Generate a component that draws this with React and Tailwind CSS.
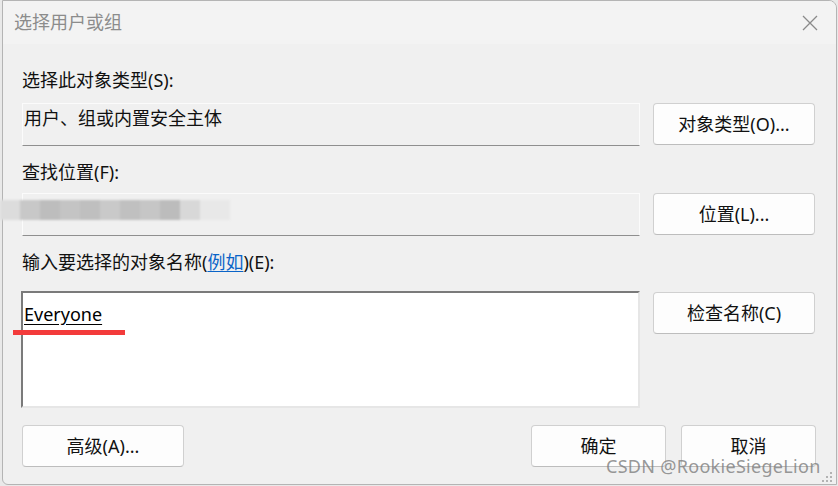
import React from "react";

const font = { fontFamily: '"Noto Sans", "Noto Sans CJK SC", sans-serif' };

const Btn = ({ children, className = "" }) => (
  <button
    className={`h-[42px] rounded-[4px] border border-[#d0d0d0] border-b-[#bdbdbd] bg-[#fdfdfd] text-[18px] text-[#111] flex items-center justify-center ${className}`}
  >
    {children}
  </button>
);

const ReadBox = ({ children }) => (
  <div className="w-[618px] h-[43px] border border-[#fbfbfb] border-b-[#8f8f8f] bg-[#f0f0f0] flex items-start pt-[1px] pl-[1px] text-[18px] text-[#111]">
    {children}
  </div>
);

export default function App() {
  return (
    <div className="w-[838px] h-[486px] bg-[#e9e9e9] overflow-hidden relative" style={font}>
      <div className="ml-[2px] w-[835px] h-[485px] border border-[#b4b4b4] rounded-tr-[8px] rounded-bl-[6px] overflow-hidden flex flex-col bg-[#f0f0f0]">
        {/* title bar */}
        <div className="h-[43px] bg-[#f3f3f3] flex items-center justify-between pl-[11px] pr-[16px] shrink-0">
          <span className="text-[18px] text-[#8c8c8c]">选择用户或组</span>
          <svg width="16" height="16" viewBox="0 0 16 16" className="mr-[2px]">
            <path d="M1 1 L15 15 M15 1 L1 15" stroke="#8a8a8a" strokeWidth="1.3" fill="none" />
          </svg>
        </div>

        <div className="flex flex-col pl-[19px]">
          <div className="mt-[24px] h-[24px] flex items-center text-[18px] text-[#111]">选择此对象类型(S):</div>
          <div className="mt-[11px] flex gap-[13px] items-start">
            <ReadBox>用户、组或内置安全主体</ReadBox>
            <Btn className="w-[162px]">对象类型(O)...</Btn>
          </div>

          <div className="mt-[14px] h-[24px] flex items-center text-[18px] text-[#111]">查找位置(F):</div>
          <div className="mt-[9px] flex gap-[13px] items-start">
            <ReadBox />
            <Btn className="w-[162px]">位置(L)...</Btn>
          </div>

          <div className="mt-[14px] h-[24px] flex items-center text-[18px] text-[#111]">
            输入要选择的对象名称(<span className="text-[#0a64c8] underline underline-offset-2">例如</span>)(E):
          </div>
          <div className="mt-[17px] flex gap-[13px] items-start">
            <div className="w-[619px] h-[117px] -ml-px bg-white border-2 border-t-[#7a7a7a] border-l-[#7a7a7a] border-r-[#e6e6e6] border-b-[#e6e6e6] pl-[1px] pt-[9px]">
              <span className="text-[18px] text-black underline underline-offset-[3px] leading-[24px]">Everyone</span>
            </div>
            <Btn className="w-[162px] mt-px">检查名称(C)</Btn>
          </div>

          <div className="mt-[17px] flex items-start">
            <Btn className="w-[162px]">高级(A)...</Btn>
            <Btn className="w-[135px] ml-[347px]">确定</Btn>
            <Btn className="w-[135px] ml-[15px]">取消</Btn>
          </div>
        </div>
      </div>

      {/* blurred location value */}
      <div className="absolute left-0 top-[200px] h-[20px] flex blur-[1px]">
        <div className="w-[20px] bg-[#dcdcdc]" />
        <div className="w-[20px] bg-[#c8c8c8]" />
        <div className="w-[20px] bg-[#bdbdbd]" />
        <div className="w-[20px] bg-[#c4c4c4]" />
        <div className="w-[20px] bg-[#bfbfbf]" />
        <div className="w-[20px] bg-[#c9c9c9]" />
        <div className="w-[20px] bg-[#c0c0c0]" />
        <div className="w-[20px] bg-[#c6c6c6]" />
        <div className="w-[20px] bg-[#bcbcbc]" />
        <div className="w-[20px] bg-[#d8d8d8]" />
        <div className="w-[30px] bg-[#e8e8e8]" />
      </div>

      {/* red annotation */}
      <div className="absolute left-[13px] top-[330px] w-[112px] h-[5px] bg-[#f33b3b]" />

      {/* watermark */}
      <div className="absolute left-[606px] top-[454px] text-[18px] leading-[24px] text-[#7d7d7d]/80 tracking-[0.3px]" style={font}>
        CSDN @RookieSiegeLion
      </div>

      {/* resize grip */}
      <svg className="absolute left-[822px] top-[472px]" width="12" height="12" viewBox="0 0 12 12">
        <g fill="#b3b3b3">
          <rect x="8" y="0" width="2" height="2" />
          <rect x="4" y="4" width="2" height="2" />
          <rect x="8" y="4" width="2" height="2" />
          <rect x="0" y="8" width="2" height="2" />
          <rect x="4" y="8" width="2" height="2" />
          <rect x="8" y="8" width="2" height="2" />
        </g>
      </svg>
    </div>
  );
}
